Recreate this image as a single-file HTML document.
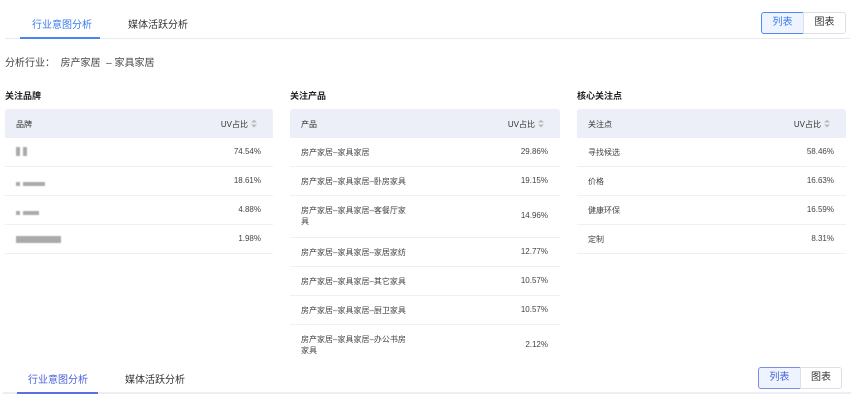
<!DOCTYPE html>
<html><head><meta charset="utf-8"><style>
*{margin:0;padding:0;box-sizing:border-box}
body{width:854px;height:404px;background:#fff;position:relative;overflow:hidden;font-family:"Liberation Sans","Noto Sans CJK SC",sans-serif;color:#333;font-size:9px}
.a{position:absolute;white-space:nowrap}
.tab{font-size:10px;color:#333}
.btn{position:absolute;height:22px;border:1px solid #dcdfe6;font-size:10px;text-align:center;padding-top:5px;background:#fff;line-height:1}
.btn.on{border-color:#4e8cf5;color:#3b7cf0;background:#eef4ff}
.t{font-size:9px;font-weight:bold;color:#222}
.tbl{position:absolute}
.hd{height:29px;background:#eceff7;border-radius:3px 3px 0 0;position:relative}
.hd span{position:absolute;top:10px;font-size:8px;color:#333;white-space:nowrap}
.hd svg{position:absolute;top:10px}
.row{position:relative;border-bottom:1px solid #eef0f3;font-size:8px;color:#444}
.row .l{position:absolute;left:11px;line-height:11px;white-space:nowrap}
.row .r{position:absolute;right:12px}
.blur{display:inline-block;height:6px;background:#aaa;filter:blur(.6px);margin-right:3px}
</style></head><body>
<div class="a tab" style="left:32px;top:16px;color:#3b7cf0">行业意图分析</div>
<div class="a tab" style="left:128px;top:16px">媒体活跃分析</div>
<div class="a" style="left:5px;top:38px;width:845px;height:1px;background:#e6eaf2"></div>
<div class="a" style="left:20px;top:37px;width:80px;height:2px;background:#4a86f0"></div>
<div class="btn on" style="left:761px;top:12px;width:43px;border-radius:3px 0 0 3px">列表</div>
<div class="btn" style="left:803px;top:12px;width:43px;border-radius:0 3px 3px 0">图表</div>
<div class="a" style="left:5px;top:54px;font-size:10px;color:#444">分析行业：&nbsp;&nbsp;房产家居&nbsp;&nbsp;– 家具家居</div>
<div class="a t" style="left:5px;top:89px">关注品牌</div>
<div class="a t" style="left:290px;top:89px">关注产品</div>
<div class="a t" style="left:577px;top:89px">核心关注点</div>

<div class="tbl" style="left:5px;top:109px;width:268px">
<div class="hd"><span style="left:11px">品牌</span><span style="right:25px">UV占比</span><svg style="right:16px" width="6" height="9" viewBox="0 0 6 9"><path d="M0 3.5L3 0.5L6 3.5ZM0 5.5L3 8.5L6 5.5Z" fill="#bbb"/></svg></div>
<div class="row" style="height:29px"><span class="l" style="top:9px"><i class="blur" style="width:4px;height:9px"></i><i class="blur" style="width:4px;height:9px"></i></span><span class="r" style="top:9px">74.54%</span></div>
<div class="row" style="height:29px"><span class="l" style="top:11px"><i class="blur" style="width:4px;height:4px"></i><i class="blur" style="width:22px;height:4px"></i></span><span class="r" style="top:9px">18.61%</span></div>
<div class="row" style="height:29px"><span class="l" style="top:11px"><i class="blur" style="width:4px;height:4px"></i><i class="blur" style="width:16px;height:4px"></i></span><span class="r" style="top:9px">4.88%</span></div>
<div class="row" style="height:29px"><span class="l" style="top:10px"><i class="blur" style="width:45px;height:7px"></i></span><span class="r" style="top:9px">1.98%</span></div>
</div>

<div class="tbl" style="left:290px;top:109px;width:270px">
<div class="hd"><span style="left:11px">产品</span><span style="right:25px">UV占比</span><svg style="right:16px" width="6" height="9" viewBox="0 0 6 9"><path d="M0 3.5L3 0.5L6 3.5ZM0 5.5L3 8.5L6 5.5Z" fill="#bbb"/></svg></div>
<div class="row" style="height:29px"><span class="l" style="top:9px">房产家居–家具家居</span><span class="r" style="top:9px">29.86%</span></div>
<div class="row" style="height:29px"><span class="l" style="top:9px">房产家居–家具家居–卧房家具</span><span class="r" style="top:9px">19.15%</span></div>
<div class="row" style="height:42px"><span class="l" style="top:9px">房产家居–家具家居–客餐厅家<br>具</span><span class="r" style="top:15px">14.96%</span></div>
<div class="row" style="height:29px"><span class="l" style="top:9px">房产家居–家具家居–家居家纺</span><span class="r" style="top:9px">12.77%</span></div>
<div class="row" style="height:29px"><span class="l" style="top:9px">房产家居–家具家居–其它家具</span><span class="r" style="top:9px">10.57%</span></div>
<div class="row" style="height:29px"><span class="l" style="top:9px">房产家居–家具家居–厨卫家具</span><span class="r" style="top:9px">10.57%</span></div>
<div class="row" style="height:42px;border:0"><span class="l" style="top:9px">房产家居–家具家居–办公书房<br>家具</span><span class="r" style="top:15px">2.12%</span></div>
</div>

<div class="tbl" style="left:577px;top:109px;width:269px">
<div class="hd"><span style="left:11px">关注点</span><span style="right:25px">UV占比</span><svg style="right:16px" width="6" height="9" viewBox="0 0 6 9"><path d="M0 3.5L3 0.5L6 3.5ZM0 5.5L3 8.5L6 5.5Z" fill="#bbb"/></svg></div>
<div class="row" style="height:29px"><span class="l" style="top:9px">寻找候选</span><span class="r" style="top:9px">58.46%</span></div>
<div class="row" style="height:29px"><span class="l" style="top:9px">价格</span><span class="r" style="top:9px">16.63%</span></div>
<div class="row" style="height:29px"><span class="l" style="top:9px">健康环保</span><span class="r" style="top:9px">16.59%</span></div>
<div class="row" style="height:29px"><span class="l" style="top:9px">定制</span><span class="r" style="top:9px">8.31%</span></div>
</div>

<div class="a" style="left:0;top:362px;width:854px;height:42px;background:#fff"></div>
<div class="a tab" style="left:28px;top:371px;color:#4a62d8">行业意图分析</div>
<div class="a tab" style="left:125px;top:371px">媒体活跃分析</div>
<div class="a" style="left:3px;top:392px;width:848px;height:2px;background:#eceef4"></div>
<div class="a" style="left:17px;top:392px;width:81px;height:2px;background:#5a6fe0"></div>
<div class="btn on" style="left:758px;top:367px;width:43px;border-radius:3px 0 0 3px;border-color:#7a8ee8;color:#4a62d8">列表</div>
<div class="btn" style="left:800px;top:367px;width:42px;border-radius:0 3px 3px 0">图表</div>
</body></html>
